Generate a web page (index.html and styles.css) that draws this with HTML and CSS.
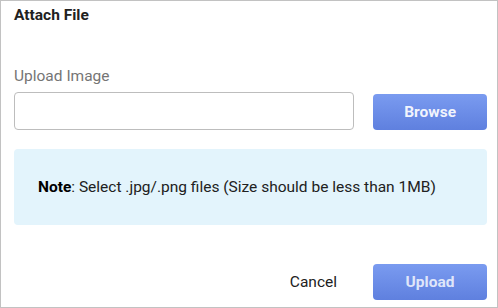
FILE: index.html
```html
<!DOCTYPE html>
<html>
<head>
<meta charset="utf-8">
<link rel="stylesheet" href="styles.css">
</head>
<body>
<div class="dialog">
  <h1 class="title">Attach File</h1>
  <label class="label" for="file">Upload Image</label>
  <div class="row">
    <input class="input" id="file" type="text">
    <button class="btn">Browse</button>
  </div>
  <div class="note"><b>Note</b>: Select .jpg/.png files (Size should be less than 1MB)</div>
  <div class="footer">
    <button class="cancel">Cancel</button>
    <button class="btn btn-upload">Upload</button>
  </div>
</div>
</body>
</html>
```
FILE: styles.css
```css
html, body {
  margin: 0;
  padding: 0;
  background: #fff;
}
.dialog {
  box-sizing: border-box;
  width: 498px;
  height: 308px;
  border: 1px solid #c2c2c2;
  padding: 4px 10px 0 13px;
  font-family: Roboto, "Liberation Sans", sans-serif;
  display: flex;
  flex-direction: column;
}
.title {
  margin: 0;
  font-size: 15.5px;
  line-height: 20px;
  font-weight: 700;
  color: #212121;
}
.label {
  margin-top: 41px;
  font-size: 15.5px;
  line-height: 20px;
  color: #757575;
}
.row {
  margin-top: 6px;
  display: flex;
  align-items: flex-end;
  gap: 19px;
}
.input {
  box-sizing: border-box;
  width: 341px;
  height: 38px;
  border: 1px solid #bdbdbd;
  border-radius: 4px;
  margin: 0;
  padding: 0 10px;
  font: inherit;
}
.btn {
  box-sizing: border-box;
  width: 114px;
  height: 36px;
  border: none;
  border-radius: 4px;
  background: linear-gradient(#7a9bf0, #5f80df);
  color: rgba(255, 255, 255, 0.92);
  font-family: inherit;
  font-size: 15.5px;
  font-weight: 700;
  padding: 0;
}
.note {
  margin-top: 19px;
  height: 76px;
  box-sizing: border-box;
  border-radius: 4px;
  background: #e3f4fc;
  display: flex;
  align-items: center;
  padding: 0 24px;
  font-size: 15.5px;
  color: #212121;
}
.note b {
  font-weight: 700;
  color: #000;
}
.footer {
  margin-top: 39px;
  display: flex;
  justify-content: flex-end;
  align-items: center;
  gap: 36px;
}
.cancel {
  background: none;
  border: none;
  padding: 0;
  font-family: inherit;
  font-size: 15.5px;
  color: #212121;
}
.btn-upload {
  color: rgba(255, 255, 255, 0.8);
}
```
